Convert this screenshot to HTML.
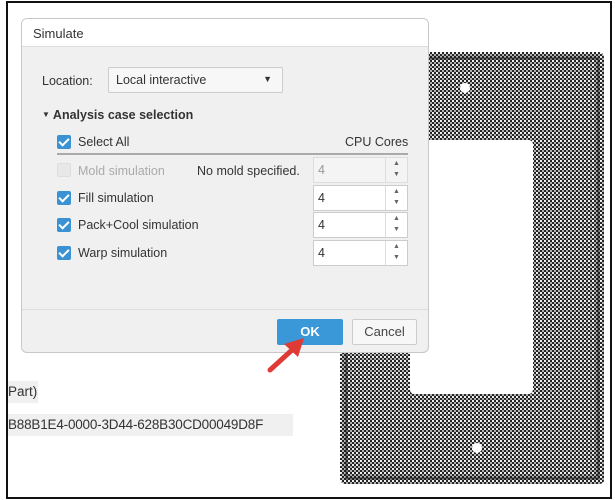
<!DOCTYPE html>
<html><head><style>
*{box-sizing:border-box;margin:0;padding:0}
body{width:615px;height:500px;background:#fff;position:relative;overflow:hidden;font-family:"Liberation Sans",sans-serif;color:#333}
.frame{position:absolute;left:6px;top:1px;width:606px;height:498px;border:2px solid #111}
.abs{position:absolute}
.dlg{position:absolute;left:21px;top:18px;width:408px;height:335px;background:#f0f0f0;border:1px solid #c8c8c8;border-radius:6px;overflow:hidden}
.hdr{height:28px;background:#fff;border-bottom:1px solid #ddd;font-size:13px;padding:7px 11px;color:#333}
.cb{position:absolute;width:14px;height:14px;background:#3a92d2;border-radius:2px}
.cb:after{content:"";position:absolute;left:4px;top:1px;width:4px;height:8px;border:solid #fff;border-width:0 2px 2px 0;transform:rotate(45deg)}
.lbl{position:absolute;font-size:12.5px;color:#333}
.spin{position:absolute;width:95px;height:26px;background:#fff;border:1px solid #ccc;font-size:12.5px;padding:5px 4px}
.spin .a{position:absolute;right:0;top:0;width:22px;height:24px;border-left:1px solid #ddd;font-size:7px;color:#666;text-align:center;line-height:11px}
</style></head><body>
<div class="frame"></div>
<svg class="abs" style="left:0;top:0" width="615" height="500">
<defs><pattern id="m" width="4" height="4" patternUnits="userSpaceOnUse"><rect width="4" height="4" fill="#222"/><circle cx="1" cy="1" r="1.1" fill="#fff"/><circle cx="3" cy="3" r="1" fill="#ddd"/></pattern></defs>
<path d="M340 52 H598 Q604 52 604 58 V480 Q604 484 598 484 H346 Q340 484 340 478 Z M410 140 V389 Q410 394 415 394 H528 Q533 394 533 389 V145 Q533 140 528 140 Z" fill="url(#m)" fill-rule="evenodd"/>
<path d="M346 58 H598 V478 H346 Z" fill="none" stroke="#111" stroke-width="3" opacity="0.5"/>
<circle cx="465" cy="88" r="5" fill="#fff"/>
<circle cx="477" cy="448" r="5" fill="#fff"/>
</svg>
<div class="abs" style="left:8px;top:381px;width:30px;height:22px;background:#f0f0f0"></div>
<div class="abs" style="left:8px;top:384px;font-size:13.5px;color:#333">Part)</div>
<div class="abs" style="left:8px;top:414px;width:285px;height:22px;background:#f0f0f0"></div>
<div class="abs" style="left:8px;top:417px;font-size:13.5px;color:#333;letter-spacing:-0.2px">B88B1E4-0000-3D44-628B30CD00049D8F</div>
<div class="dlg">
<div class="hdr">Simulate</div>
<div class="lbl" style="left:20px;top:55px">Location:</div>
<div class="abs" style="left:86px;top:48px;width:175px;height:26px;border:1px solid #ccc;background:#f7f7f7;border-radius:2px;font-size:12.5px;padding:5px 7px">Local interactive<span style="position:absolute;right:10px;top:6px;font-size:9px">▼</span></div>
<div class="lbl" style="left:20px;top:89px;font-weight:bold"><span style="font-size:8px;vertical-align:2px">▼</span> Analysis case selection</div>
<div class="cb" style="left:35px;top:116px"></div>
<div class="lbl" style="left:56px;top:116px">Select All</div>
<div class="lbl" style="left:323px;top:116px">CPU Cores</div>
<div class="abs" style="left:35px;top:134px;width:351px;height:2px;background:#aaa"></div>
<div class="abs" style="left:35px;top:144px;width:14px;height:14px;background:#e8e8e8;border:1px solid #ddd;border-radius:2px"></div>
<div class="lbl" style="left:56px;top:145px;color:#aaa">Mold simulation</div>
<div class="lbl" style="left:175px;top:145px">No mold specified.</div>
<div class="spin" style="left:291px;top:138px;background:#f4f4f4;color:#999;border-color:#ddd">4<div class="a">▲<br>▼</div></div>
<div class="cb" style="left:35px;top:172px"></div><div class="lbl" style="left:56px;top:172px">Fill simulation</div>
<div class="spin" style="left:291px;top:166px">4<div class="a">▲<br>▼</div></div>
<div class="cb" style="left:35px;top:199px"></div><div class="lbl" style="left:56px;top:199px">Pack+Cool simulation</div>
<div class="spin" style="left:291px;top:193px">4<div class="a">▲<br>▼</div></div>
<div class="cb" style="left:35px;top:227px"></div><div class="lbl" style="left:56px;top:227px">Warp simulation</div>
<div class="spin" style="left:291px;top:221px">4<div class="a">▲<br>▼</div></div>
<div class="abs" style="left:0;top:290px;width:408px;height:1px;background:#ddd"></div>
<div class="abs" style="left:255px;top:300px;width:66px;height:26px;background:#3a97d8;color:#fff;font-weight:bold;font-size:13px;text-align:center;line-height:26px;border-radius:2px">OK</div>
<div class="abs" style="left:330px;top:300px;width:65px;height:26px;background:#f7f7f7;border:1px solid #ccc;font-size:13px;text-align:center;line-height:24px;border-radius:2px;color:#444">Cancel</div>
</div>
<svg class="abs" style="left:0;top:0" width="615" height="500">
<line x1="270" y1="370" x2="292" y2="350" stroke="#e03a36" stroke-width="5" stroke-linecap="round"/>
<polygon points="304,338 284,344 298,357" fill="#e03a36"/>
</svg>
</body></html>
